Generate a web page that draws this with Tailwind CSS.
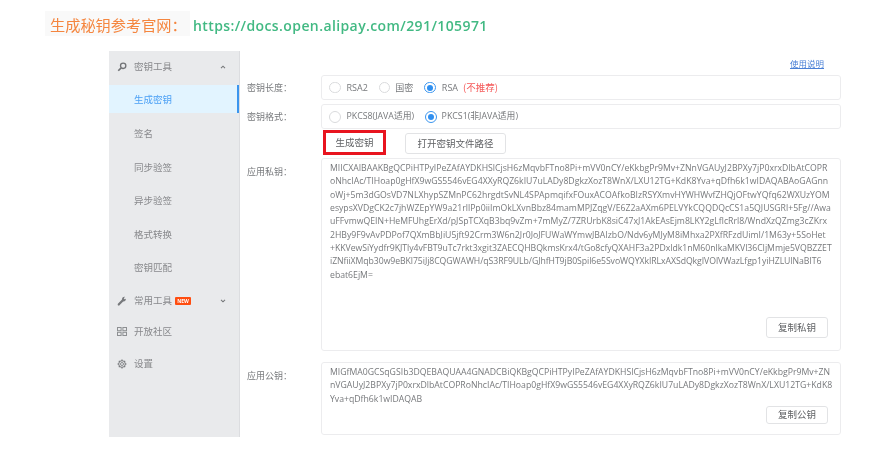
<!DOCTYPE html>
<html lang="zh-CN">
<head>
    <meta charset="UTF-8">
    <title>生成密钥</title>
    <script src="https://cdn.jsdelivr.net/npm/@tailwindcss/browser@4"></script>
</head>
<body class="bg-white font-['Open_Sans','Noto_Sans_CJK_SC',sans-serif]">
<div class="w-[894px] h-[450px] overflow-hidden blur-[0.4px]">

    <!-- title line -->
    <div class="h-[51px] pl-[45px] pt-[11px] flex items-start">
        <div class="w-[145px] h-[25px] bg-[#f9f9f9] pl-[5px] pt-[1px] flex items-center text-[15.2px] text-[#f5863f] font-['Noto_Sans_CJK_SC',sans-serif] whitespace-nowrap">生成秘钥参考官网：</div>
        <div class="ml-[3px] h-[25px] pt-[3px] flex items-center text-[14px] font-semibold tracking-[0.4px] text-[#42b983] whitespace-nowrap">https://docs.open.alipay.com/291/105971</div>
    </div>

    <div class="flex ml-[109px] h-[386px]">
        <!-- sidebar -->
        <aside class="w-[131px] shrink-0 bg-[#e9eaec] text-[#88898c] text-[9.5px] font-['Noto_Sans_CJK_SC',sans-serif] border-r border-[#dcdde0]">
            <div class="h-[31px] pl-[8px] pr-[13px] flex items-center">
                <svg class="w-[10px] h-[10px] mr-[7px]" viewBox="0 0 12 12" fill="none" stroke="#727477" stroke-width="1.6"><circle cx="7.4" cy="4.6" r="3.2"/><path d="M5 7 1.5 10.5" stroke-width="2"/></svg>
                <span>密钥工具</span>
                <svg class="w-[6px] h-[4px] ml-auto" viewBox="0 0 7 5" fill="none" stroke="#77797c" stroke-width="1.4"><path d="M1 4 3.5 1.5 6 4"/></svg>
            </div>
            <div class="h-[33.5px] mb-[1px] flex items-center">
                <div class="relative w-full h-[28px] bg-[#e2f4ff] pl-[25px] flex items-center text-[#4ba0f5]">生成密钥
                    <span class="absolute right-0 top-0 w-[2px] h-full bg-[#3b95ee]"></span>
                </div>
            </div>
            <div class="h-[33.5px] pl-[25px] flex items-center">签名</div>
            <div class="h-[33.5px] pl-[25px] flex items-center">同步验签</div>
            <div class="h-[33.5px] pl-[25px] flex items-center">异步验签</div>
            <div class="h-[33.5px] pl-[25px] flex items-center">格式转换</div>
            <div class="h-[33.5px] pl-[25px] flex items-center">密钥匹配</div>
            <div class="h-[33px] pl-[8px] pr-[13px] flex items-center">
                <svg class="w-[10px] h-[10px] mr-[7px]" viewBox="0 0 12 12" fill="#77797c"><path d="M1 11 .8 9.6 6 4.2C5.8 2.4 7.4.6 9.6 1L8.2 2.8l.8 1.2 1.6-.6c.3 2-1.4 3.6-3.2 3.2L2.4 11.6Z"/></svg>
                <span>常用工具</span>
                <span class="ml-[3px] mt-[1px] w-[16px] h-[8px] rounded-[1px] bg-[#ff4d10] text-white text-[5px] font-bold font-['Open_Sans',sans-serif] flex items-center justify-center leading-none">NEW</span>
                <svg class="w-[6px] h-[4px] ml-auto" viewBox="0 0 7 5" fill="none" stroke="#77797c" stroke-width="1.4"><path d="M1 1 3.5 3.5 6 1"/></svg>
            </div>
            <div class="h-[29px] pl-[8px] flex items-center">
                <svg class="w-[10px] h-[9px] mr-[7px]" viewBox="0 0 10 9" fill="none" stroke="#8d8f92" stroke-width="1"><rect x=".5" y=".5" width="3.6" height="3.2"/><rect x="5.9" y=".5" width="3.6" height="3.2"/><rect x=".5" y="5.3" width="3.6" height="3.2"/><rect x="5.9" y="5.3" width="3.6" height="3.2"/></svg>
                <span>开放社区</span>
            </div>
            <div class="h-[35px] pl-[8px] flex items-center">
                <svg class="w-[10px] h-[10px] mr-[7px]" viewBox="0 0 12 12" fill="none" stroke="#77797c"><circle cx="6" cy="6" r="1.8"/><circle cx="6" cy="6" r="4" stroke-width="1.2"/><path d="M6 .6v1.6M6 9.8v1.6M.6 6h1.6M9.8 6h1.6M2.2 2.2l1.1 1.1M8.7 8.7l1.1 1.1M9.8 2.2 8.7 3.3M3.3 8.7l-1.1 1.1" stroke-width="1.4"/></svg>
                <span>设置</span>
            </div>
        </aside>

        <!-- main -->
        <main class="w-[601px] pl-[7px] text-[#77797c] text-[9px] font-['Open_Sans','Noto_Sans_CJK_SC',sans-serif]">
            <div class="h-[24px] pr-[17px] flex justify-end items-center">
                <a class="text-[8.5px] text-[#4a80d6] underline font-['Noto_Sans_CJK_SC',sans-serif]">使用说明</a>
            </div>

            <div class="flex items-center">
                <div class="w-[74px] font-['Noto_Sans_CJK_SC',sans-serif]">密钥长度：</div>
                <div class="w-[520px] h-[25px] border border-[#ececee] rounded-[3px] pl-[7px] flex items-center">
                    <span class="w-[11.5px] h-[11.5px] rounded-full border border-[#d9dadc] mr-[6px]"></span><span>RSA2</span>
                    <span class="w-[11.5px] h-[11.5px] rounded-full border border-[#d9dadc] ml-[11px] mr-[5px]"></span><span class="font-['Noto_Sans_CJK_SC',sans-serif]">国密</span>
                    <span class="w-[11.5px] h-[11.5px] rounded-full border border-[#3b95ee] ml-[11px] mr-[6px] flex items-center justify-center"><span class="w-[6px] h-[6px] rounded-full bg-[#2f8ff0]"></span></span><span>RSA</span>
                    <span class="ml-[5px] text-[9.5px] text-[#f55a5a] font-['Noto_Sans_CJK_SC',sans-serif]">(不推荐)</span>
                </div>
            </div>
            <div class="flex items-center mt-[4px]">
                <div class="w-[74px] pt-[1px] font-['Noto_Sans_CJK_SC',sans-serif]">密钥格式：</div>
                <div class="w-[520px] h-[25px] border border-[#ececee] rounded-[3px] pl-[7px] pt-[1px] flex items-center text-[8.8px]">
                    <span class="w-[11.5px] h-[11.5px] rounded-full border border-[#d9dadc] mr-[6px]"></span><span>PKCS8(JAVA适用)</span>
                    <span class="w-[11.5px] h-[11.5px] rounded-full border border-[#3b95ee] ml-[11px] mr-[5px] flex items-center justify-center"><span class="w-[6px] h-[6px] rounded-full bg-[#2f8ff0]"></span></span><span>PKCS1(非JAVA适用)</span>
                </div>
            </div>

            <div class="flex items-center mt-[1px] ml-[76px]">
                <button class="w-[63px] h-[25px] border-[3px] border-[#e8141f] text-[9.5px] text-[#5f6164] font-['Noto_Sans_CJK_SC',sans-serif]">生成密钥</button>
                <button class="ml-[19px] mt-[2px] w-[101px] h-[21px] border border-[#e2e3e5] rounded-[3px] text-[9.5px] text-[#5f6164] font-['Noto_Sans_CJK_SC',sans-serif]">打开密钥文件路径</button>
            </div>

            <div class="flex mt-[3px]">
                <div class="w-[74px] pt-[7px] font-['Noto_Sans_CJK_SC',sans-serif]">应用私钥：</div>
                <div class="w-[520px] h-[193px] border border-[#ececee] rounded-[3px] pl-[8px] pt-[3px] flex flex-col text-[8.7px] leading-[13.35px] whitespace-nowrap">
                    <div>
                        <div>MIICXAIBAAKBgQCPiHTPyIPeZAfAYDKHSlCjsH6zMqvbFTno8Pi+mVV0nCY/eKkbgPr9Mv+ZNnVGAUyJ2BPXy7jP0xrxDlbAtCOPR</div>
                        <div>oNhcIAc/TIHoap0gHfX9wGS5546vEG4XXyRQZ6kIU7uLADy8DgkzXozT8WnX/LXU12TG+KdK8Yva+qDfh6k1wIDAQABAoGAGnn</div>
                        <div>oWj+5m3dGOsVD7NLXhypSZMnPC62hrgdtSvNL4SPApmqifxFOuxACOAfkoBIzRSYXmvHYWHWvfZHQjOFtwYQfq62WXUzYOM</div>
                        <div>esypsXVDgCK2c7jhWZEpYW9a21rllPp0iiImOkLXvnBbz84mamMPJZqgV/E6Z2aAXm6PELVYkCQQDQcCS1a5QJUSGRl+5Fg//Awa</div>
                        <div>uFFvmwQEIN+HeMFUhgErXd/pJSpTCXqB3bq9vZm+7mMyZ/7ZRUrbK8siC47xJ1AkEAsEjm8LKY2gLflcRrl8/WndXzQZmg3cZKrx</div>
                        <div>2HBy9F9vAvPDPof7QXmBbJiU5jft92Crm3W6n2Jr0JoJFUWaWYmwJBAIzbO/Ndv6yMJyM8iMhxa2PXfRFzdUimI/1M63y+5SoHet</div>
                        <div class="tracking-[-0.04px]">+KKVewSiYydfr9KJTly4vFBT9uTc7rkt3xgit3ZAECQHBQkmsKrx4/tGo8cfyQXAHF3a2PDxIdk1nM60nlkaMKVl36CIjMmje5VQBZZET</div>
                        <div class="tracking-[-0.065px]">iZNfiiXMqb30w9eBKl75iJj8CQGWAWH/qS3RF9ULb/GJhfHT9jB0Spil6e5SvoWQYXkIRLxAXSdQkgIVOlVWazLfgp1yiHZLUlNaBIT6</div>
                        <div>ebat6EjM=</div>
                    </div>
                    <button class="mt-auto mb-[12px] mr-[12px] self-end w-[62px] h-[21px] border border-[#e2e3e5] rounded-[3px] text-[9.5px] text-[#5f6164] font-['Noto_Sans_CJK_SC',sans-serif]">复制私钥</button>
                </div>
            </div>

            <div class="flex mt-[11px]">
                <div class="w-[74px] pt-[7px] font-['Noto_Sans_CJK_SC',sans-serif]">应用公钥：</div>
                <div class="w-[520px] h-[73px] border border-[#ececee] rounded-[3px] pl-[8px] pt-[3px] flex flex-col text-[8.7px] leading-[13.35px] whitespace-nowrap">
                    <div>
                        <div>MIGfMA0GCSqGSIb3DQEBAQUAA4GNADCBiQKBgQCPiHTPyIPeZAfAYDKHSlCjsH6zMqvbFTno8Pi+mVV0nCY/eKkbgPr9Mv+ZN</div>
                        <div>nVGAUyJ2BPXy7jP0xrxDlbAtCOPRoNhcIAc/TIHoap0gHfX9wGS5546vEG4XXyRQZ6kIU7uLADy8DgkzXozT8WnX/LXU12TG+KdK8</div>
                        <div>Yva+qDfh6k1wIDAQAB</div>
                    </div>
                    <button class="mt-auto mb-[10px] mr-[12px] self-end w-[62px] h-[21px] border border-[#e2e3e5] rounded-[3px] text-[9.5px] text-[#5f6164] font-['Noto_Sans_CJK_SC',sans-serif]">复制公钥</button>
                </div>
            </div>
        </main>
    </div>
</div>
</body>
</html>
